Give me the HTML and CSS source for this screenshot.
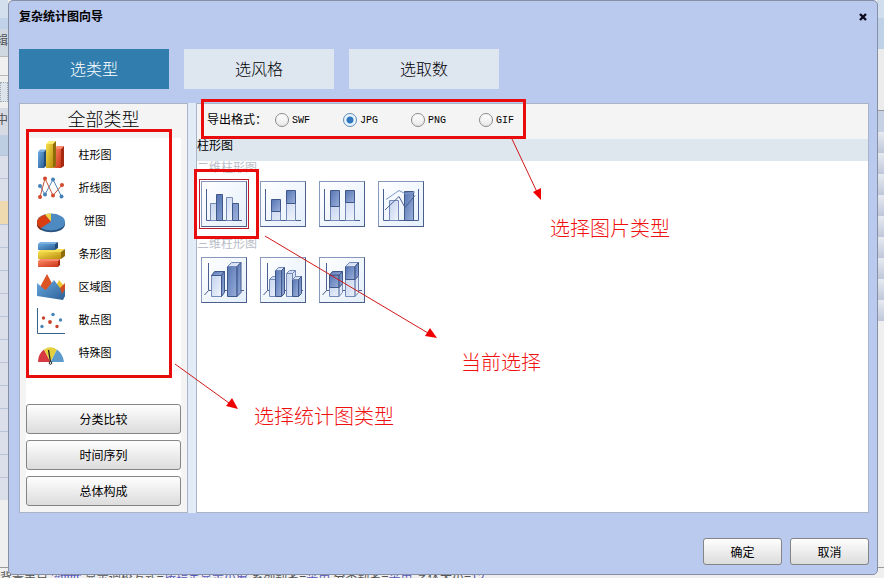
FILE: index.html
```html
<!DOCTYPE html>
<html lang="zh-CN">
<head>
  <meta charset="UTF-8">
  <title>复杂统计图向导</title>
  <link rel="stylesheet" href="styles.css">
</head>
<body>

  <!-- page behind the dialog -->
  <div class="backdrop">
    <div class="backdrop-main">
      <div class="backdrop-left">
        <div class="bar-top"></div>
        <div class="bar-tab"></div>
        <div class="bar-menu">辑</div>
        <div class="bar-input"></div>
        <div class="bar-dots"></div>
        <div class="bar-menu bar-cell">中</div>
        <div class="bar-head"></div>
        <div class="bar-rows"></div>
        <div class="bar-current"></div>
        <div class="bar-rows bar-rest"></div>
      </div>
      <div class="backdrop-right">
        <div class="side-top"></div>
        <div class="side-tab"></div>
        <div class="side-tools"></div>
        <div class="side-head"></div>
        <div class="side-rows"></div>
      </div>
    </div>
    <div class="backdrop-status">背景串户 <b>'#ffffff'</b> 显示调校方式=<b>按指定显示小窗</b> 系列别名=<b>采用</b> 分类别名=<b>采用</b> 字体大小=<b>12</b></div>
  </div>

  <div class="dialog" role="dialog" aria-labelledby="dialogTitle">
    <div class="title-bar">
      <h1 id="dialogTitle">复杂统计图向导</h1>
      <button type="button" class="close-btn" aria-label="关闭">
        <svg width="8" height="8" viewBox="0 0 8 8"><path d="M1 1L7 7M7 1L1 7" stroke="#0a0a1e" stroke-width="2.4"/></svg>
      </button>
    </div>

    <div class="tabs">
      <button type="button" class="tab active">选类型</button>
      <button type="button" class="tab">选风格</button>
      <button type="button" class="tab">选取数</button>
    </div>

    <div class="panels">
      <div class="side-panel">
        <h2>全部类型</h2>
        <div class="side-body">
          <ul class="type-list">
            <li><button type="button">
              <svg width="28" height="28" viewBox="0 0 28 28">
                <defs>
                  <linearGradient id="blue" x1="0" y1="0" x2="1" y2="1"><stop offset="0" stop-color="#68a9e0"/><stop offset="1" stop-color="#2c5f96"/></linearGradient>
                  <linearGradient id="gold" x1="0" y1="0" x2="1" y2="1"><stop offset="0" stop-color="#f4e04e"/><stop offset="1" stop-color="#bb8c0c"/></linearGradient>
                  <linearGradient id="red" x1="0" y1="0" x2="1" y2="1"><stop offset="0" stop-color="#fa8262"/><stop offset="1" stop-color="#c93314"/></linearGradient>
                </defs>
                <path fill="url(#blue)" d="M1 11h6v16H1z"/><path fill="#79b2e2" d="M1 11l2-2.500h6L7 11z"/><path fill="#214b78" d="M7 11l2-2.500V25l-2 2z"/>
                <path fill="url(#red)" d="M17 8h7v19h-7z"/><path fill="#ff8b6e" d="M17 8l3-3h7l-3 3z"/><path fill="#a52a10" d="M24 8l3-3v20l-3 2z"/>
                <path fill="url(#gold)" d="M9 3h7v24H9z"/><path fill="#ffed70" d="M9 3l3-3h7l-3 3z"/><path fill="#8f6c0a" d="M16 3l3-3v25l-3 2z"/>
              </svg>
              <span>柱形图</span></button></li>
            <li><button type="button">
              <svg width="28" height="28" viewBox="0 0 28 28">
                <path fill="none" stroke="#4f86b8" d="M3 12l5 8.500L16 5.500l8.500 17"/>
                <path fill="none" stroke="#c4553c" d="M3 23L8 4.500l8 17L25 11"/>
                <g fill="#4580b6"><circle cx="3" cy="12" r="2"/><circle cx="8" cy="20.500" r="2"/><circle cx="16" cy="5.500" r="2"/><circle cx="24.500" cy="22.500" r="2"/></g>
                <g fill="#d1492c"><circle cx="3" cy="23" r="2"/><circle cx="8" cy="4.500" r="2"/><circle cx="16" cy="21.500" r="2"/><circle cx="25" cy="11" r="2"/></g>
              </svg>
              <span>折线图</span></button></li>
            <li><button type="button">
              <svg width="28" height="28" viewBox="0 0 28 28">
                <path fill="#2b5582" d="M0 15v2c0 11 28 11 28 0v-2z"/>
                <ellipse cx="14" cy="15" rx="14" ry="8.500" fill="#4d8ac2"/>
                <path fill="#d83e12" d="M14 14.500L8 7.400C-1 10-3 18 4 21z"/>
                <path fill="#8c2c12" d="M0 15c0 3 1 4.500 4 6v2c-3-1.500-4-3.500-4-6z"/>
                <path fill="#f3d448" d="M14 14.500L8 7.400q3-1 6-.9z"/>
              </svg>
              <span>饼图</span></button></li>
            <li><button type="button">
              <svg width="28" height="28" viewBox="0 0 28 28">
                <path fill="url(#red)" d="M1 21h20v6H1z"/><path fill="#f98b6c" d="M1 21l2-2h20l-2 2z"/><path fill="#a52a10" d="M21 21l2-2v6l-2 2z"/>
                <path fill="url(#gold)" d="M1 12h23v7H1z"/><path fill="#f6df50" d="M1 12l3-3h24l-4 3z"/><path fill="#8f6c0a" d="M24 12l4-3v7l-4 3z"/>
                <path fill="url(#blue)" d="M1 4h17v6H1z"/><path fill="#79b2e2" d="M1 4l2-2h18l-3 2z"/><path fill="#214b78" d="M18 4l3-2v6l-3 2z"/>
              </svg>
              <span>条形图</span></button></li>
            <li><button type="button">
              <svg width="28" height="28" viewBox="0 0 28 28">
                <path fill="#edc62f" d="M18 15l4-8 6 7v9h-8z"/>
                <path fill="#cf4a20" d="M22 16l6-6v13l-4 3z"/>
                <path fill="#dc5324" d="M3 14l7-13 8 15-9 6z"/>
                <path fill="url(#blue)" d="M0 10l7 6 2 1 8-10 6 8 2 6 3-5v7l-2 4-26-4z"/>
              </svg>
              <span>区域图</span></button></li>
            <li><button type="button">
              <svg width="28" height="28" viewBox="0 0 28 28">
                <path fill="none" stroke="#38648c" d="M.5 2v25.500H28"/>
                <g fill="#c8432b"><circle cx="6.500" cy="12" r="1.700"/><circle cx="13" cy="16" r="1.900"/><circle cx="20" cy="20.500" r="1.700"/></g>
                <g fill="#4a86b8"><circle cx="16" cy="8.500" r="1.800"/><circle cx="23.500" cy="14" r="1.700"/><circle cx="5" cy="20.500" r="1.700"/></g>
              </svg>
              <span>散点图</span></button></li>
            <li><button type="button">
              <svg width="28" height="28" viewBox="0 0 28 28">
                <path fill="#d83a42" d="M13.500 23H1Q1 15 7 10.500z"/>
                <path fill="#e3d03c" d="M13.500 23L7 10.500q6.500-4.500 13 0z"/>
                <path fill="#5d9bcd" d="M13.500 23L20 10.500Q26 15 27 23z"/>
                <path stroke="#222" stroke-width="1.300" d="M11.500 11l2 12"/>
                <circle cx="13.500" cy="24" r="1.300" fill="#fff" stroke="#222"/>
              </svg>
              <span>特殊图</span></button></li>
          </ul>
          <div class="side-actions">
            <button type="button" class="btn">分类比较</button>
            <button type="button" class="btn">时间序列</button>
            <button type="button" class="btn">总体构成</button>
          </div>
        </div>
      </div>

      <div class="main-panel">
        <div class="format-bar">
          <span class="format-label">导出格式：</span>
          <label><input type="radio" name="format" value="swf"><span>SWF</span></label>
          <label><input type="radio" name="format" value="jpg" checked><span>JPG</span></label>
          <label><input type="radio" name="format" value="png"><span>PNG</span></label>
          <label><input type="radio" name="format" value="gif"><span>GIF</span></label>
        </div>
        <div class="category">柱形图</div>

        <h3>二维柱形图</h3>
        <div class="tiles">
          <button type="button" class="tile selected" aria-label="簇状柱形图">
            <svg width="44" height="44" viewBox="1 1 44 44">
              <defs>
                <linearGradient id="light" x1="0" y1="0" x2="1" y2="1"><stop offset="0" stop-color="#c3d2ed"/><stop offset="1" stop-color="#f1f5fd"/></linearGradient>
                <linearGradient id="dark" x1="0" y1="0" x2="1" y2="1"><stop offset="0" stop-color="#5675b3"/><stop offset="1" stop-color="#9bb0da"/></linearGradient>
              </defs>
              <path class="axis" d="M5.500 8v31.500H41"/>
              <path class="light" d="M9.500 22.500h6v17h-6zM25.500 16.500h6v23h-6z"/>
              <path class="dark" d="M15.500 13.500h6v26h-6zM31.500 22.500h6v17h-6z"/>
            </svg>
          </button>
          <button type="button" class="tile" aria-label="堆积柱形图">
            <svg width="44" height="44" viewBox="1 1 44 44">
              <path class="axis" d="M5.500 8v31.500H41"/>
              <path class="light" d="M11.500 30.500h9v9h-9zM26.500 22.500h9v17h-9z"/>
              <path class="dark" d="M11.500 18.500h9v12h-9z"/><path class="dark" d="M26.500 9.500h9v13h-9z"/>
            </svg>
          </button>
          <button type="button" class="tile" aria-label="百分比堆积柱形图">
            <svg width="44" height="44" viewBox="1 1 44 44">
              <path class="axis" d="M5.500 8v31.500H41"/>
              <path class="light" d="M11.500 25.500h9v14h-9zM26.500 21.500h9v18h-9z"/>
              <path class="dark" d="M11.500 9.500h9v16h-9z"/><path class="dark" d="M26.500 9.500h9v12h-9z"/>
            </svg>
          </button>
          <button type="button" class="tile" aria-label="柱线组合图">
            <svg width="44" height="44" viewBox="1 1 44 44">
              <path class="axis" d="M5.500 8v31.500h35V8"/>
              <path class="light" d="M11.500 19.500h9v20h-9z"/>
              <path class="dark" d="M26.500 10.500h9v29h-9z"/>
              <path class="line-light" d="M8 18.500l13-9 7 3.500 9-2"/>
              <path class="axis" d="M7 29l14-13.500 6 11 10-12"/>
            </svg>
          </button>
        </div>

        <h3>三维柱形图</h3>
        <div class="tiles">
          <button type="button" class="tile" aria-label="三维柱形图">
            <svg width="44" height="44" viewBox="1 1 44 44">
              <path class="axis" d="M7.500 6v27.500H43M7.500 33.500l-4 4.500"/>
              <path class="light" d="M10.500 18.500h10v21h-10z"/><path class="dark" d="M10.500 18.500l3-4h10l-3 4z"/><path class="dark" d="M20.500 18.500l3-4v21l-3 4z"/>
              <path class="dark" d="M26.500 9.500H36v30h-9.500z"/><path class="light" d="M26.500 9.500l4-4h9.500l-4 4z"/><path class="dark" d="M36 9.500l4-4v30l-4 4z"/>
            </svg>
          </button>
          <button type="button" class="tile" aria-label="三维簇状柱形图">
            <svg width="44" height="44" viewBox="1 1 44 44">
              <path class="axis" d="M7.500 6v27.500H43M7.500 33.500l-4 4.500"/>
              <path class="light" d="M9.500 22.500h6v17h-6zM9.500 22.500l3-3h6l-3 3z"/>
              <path class="dark" d="M15.500 13.500h6v26h-6z"/><path class="light" d="M15.500 13.500l3-3h6l-3 3z"/><path class="dark" d="M21.500 13.500l3-3v26l-3 3z"/>
              <path class="light" d="M26.500 16.500h6v23h-6zM26.500 16.500l3-3h6l-3 3zM32.500 16.500l3-3v20l-3 3z"/>
              <path class="dark" d="M32.500 22.500h6v17h-6z"/><path class="light" d="M32.500 22.500l3-3h6l-3 3z"/><path class="dark" d="M38.500 22.500l3-3v17l-3 3z"/>
            </svg>
          </button>
          <button type="button" class="tile" aria-label="三维堆积柱形图">
            <svg width="44" height="44" viewBox="1 1 44 44">
              <path class="axis" d="M7.500 6v27.500H43M7.500 33.500l-4 4.500"/>
              <path class="light" d="M10.500 30.500h9.500v9h-9.500zM20 30.500l3.500-4v9l-3.500 4z"/>
              <path class="dark" d="M10.500 18h9.500v12.500h-9.500z"/><path class="dark" d="M10.500 18l3-3.500h10L20 18z"/><path class="dark" d="M20 18l3.500-3.500v12l-3.500 4z"/>
              <path class="light" d="M26.500 22.500H36v17h-9.500zM36 22.500l3.500-4v17l-3.500 4z"/>
              <path class="dark" d="M26.500 9.500H36v13h-9.500z"/><path class="light" d="M26.500 9.500l4-4h9l-3.500 4z"/><path class="dark" d="M36 9.500l3.500-4v13l-3.500 4z"/>
            </svg>
          </button>
        </div>
      </div>
    </div>

    <div class="dialog-actions">
      <button type="button" class="btn">确定</button>
      <button type="button" class="btn">取消</button>
    </div>
  </div>

  <!-- red callouts drawn on top of the dialog -->
  <div class="callouts">
    <svg width="884" height="578" viewBox="0 0 884 578">
      <g fill="none" stroke="#e80c0c" stroke-width="3">
        <path d="M27.500 130.500h143v246h-143z"/>
        <path d="M202.500 100.500h322v37h-322z"/>
        <path d="M195.500 170.500h62v67h-62z"/>
      </g>
      <g stroke="#d01818">
        <path d="M512 139l25 53M265 236l163 97M175 364l54 39"/>
      </g>
      <g fill="#f00000">
        <path d="M541 200l-8-8 8-4z"/>
        <path d="M437 338l-12-2 5-8z"/>
        <path d="M238 409l-12-3 6-8z"/>
      </g>
    </svg>
    <span class="note note-format">选择图片类型</span>
    <span class="note note-current">当前选择</span>
    <span class="note note-type">选择统计图类型</span>
  </div>

</body>
</html>
```
FILE: styles.css
```css
* {
  box-sizing: border-box;
}

body {
  margin: 0;
  position: relative;
  min-height: 100vh;
  overflow: hidden;
  font-family: "Liberation Sans", "Noto Sans CJK SC", sans-serif;
  font-size: 12px;
  line-height: 16px;
  color: #000;
  background: #efefef;
}

h1, h2, h3, ul {
  margin: 0;
  padding: 0;
  font-weight: normal;
}

button {
  font: inherit;
  color: inherit;
  padding: 0;
  cursor: pointer;
}

svg {
  display: block;
}

/* page behind */
.backdrop {
  position: absolute;
  inset: 0;
  overflow: hidden;
  display: flex;
  flex-direction: column;
}

.backdrop-main {
  flex: 1;
  min-height: 0;
  display: flex;
  justify-content: space-between;
  border-bottom: 1px solid #999;
}

.backdrop-left {
  width: 8px;
  overflow: hidden;
}

.backdrop-right {
  width: 7px;
}

.bar-top { height: 18px; background: #d3dfec; }
.bar-tab { height: 11px; background: #bfd2e8; }

.bar-menu {
  height: 27px;
  padding-top: 4px;
  background: #cfd7e0;
  color: #555;
  direction: rtl;
}

.bar-input {
  height: 20px;
  background: #f0f0f0;
  border: solid #b8b8b8;
  border-width: 1px 0;
}

.bar-dots {
  height: 20px;
  margin: 6px 0;
  background: #dde3ea;
  border: 1px dotted #a0a8b0;
}

.bar-cell { background: #d6dbe3; }
.bar-head { height: 20px; background: #bdcde2; }

.bar-rows {
  height: 46px;
  background: repeating-linear-gradient(#b9c4d8 0 1px, #dbdfea 1px 23px);
}

.bar-current { height: 23px; background: #efd9af; }
.bar-rest { height: 276px; }

.side-top { height: 18px; background: #d0deed; }
.side-tab { height: 31px; background: #bfd1e6; }
.side-tools { height: 62px; background: #ececec; border-bottom: 1px solid #999; }
.side-head { height: 21px; background: #c6d2e3; }

.side-rows {
  height: 189px;
  background: repeating-linear-gradient(#e7eaf0 0, #bec7da 21px);
}

.backdrop-status {
  height: 10px;
  padding-top: 2px;
  white-space: nowrap;
  color: #555;
}

.backdrop-status b {
  font-weight: normal;
  color: #5555bb;
}

/* dialog */
.dialog {
  position: absolute;
  inset: 0 6px 3px 8px;
  display: flex;
  flex-direction: column;
  padding: 0 8px 9px 10px;
  background: #bac9ee;
  border: 1px solid #858fa5;
  border-radius: 5px;
}

.title-bar {
  display: flex;
  justify-content: space-between;
  align-items: center;
  height: 32px;
}

.title-bar h1 {
  font-size: 12px;
  font-weight: bold;
}

.close-btn {
  padding: 2px;
  border: 0;
  background: none;
}

.tabs {
  display: flex;
  gap: 15px;
  margin-top: 16px;
}

.tab {
  width: 150px;
  height: 40px;
  padding-top: 2px;
  border: 0;
  font-size: 16px;
  font-weight: 300;
  background: #dee6f0;
}

.tab.active {
  background: #307dae;
  color: #fff;
}

.panels {
  flex: 1;
  display: flex;
  gap: 8px;
  margin-top: 14px;
  background: #e1ecf6;
}

.side-panel {
  width: 169px;
  display: flex;
  flex-direction: column;
  padding: 0 6px 6px;
  background: #f4f4f4;
  border: 1px solid #aab4c8;
}

.side-panel h2 {
  height: 34px;
  font-size: 18px;
  font-weight: 300;
  line-height: 32px;
  text-align: center;
}

.side-body {
  flex: 1;
  display: flex;
  flex-direction: column;
  justify-content: space-between;
  background: #fff;
}

.type-list {
  list-style: none;
}

.type-list button {
  display: flex;
  align-items: center;
  gap: 12px;
  width: 100%;
  height: 33px;
  padding-left: 11px;
  border: 0;
  background: none;
  font-size: 11px;
}

.type-list span {
  width: 36px;
}

.side-actions {
  display: flex;
  flex-direction: column;
  gap: 6px;
}

.btn {
  height: 30px;
  padding-top: 2px;
  border: 1px solid #858585;
  border-radius: 3px;
  background: linear-gradient(#fefefe, #dcdcdc);
}

.main-panel {
  flex: 1;
  background: #fff;
  border: 1px solid #aab4c8;
}

.format-bar {
  display: flex;
  align-items: center;
  height: 35px;
  padding: 0 10px 4px;
  background: #f4f4f4;
}

.format-label {
  width: 68px;
}

.format-bar label {
  display: flex;
  align-items: center;
  gap: 3px;
  width: 68px;
  font-family: "Liberation Mono", monospace;
  font-size: 10px;
}

.format-bar label span {
  padding-top: 2px;
}

.format-bar input {
  appearance: none;
  width: 14px;
  height: 14px;
  margin: 0;
  border: 1px solid #8a8a8a;
  border-radius: 50%;
  background: linear-gradient(#fff, #e8e8e8);
}

.format-bar input:checked {
  border-color: #5a8cb5;
  background: radial-gradient(#2f78bd 0 3px, #eaf4fc 4px);
}

.category {
  height: 22px;
  line-height: 14px;
  background: #dde7ed;
}

.main-panel h3 {
  height: 20px;
  font-size: 12px;
  line-height: 14px;
  color: #b9bec8;
}

.tiles {
  display: flex;
  gap: 13px;
  padding: 0 4px;
  margin-bottom: 10px;
}

.tile {
  width: 46px;
  height: 46px;
  border: 1px solid #8798bd;
  border-right-color: #4c5f8a;
  border-bottom-color: #4c5f8a;
  background: linear-gradient(135deg, #fff, #e4effc);
  overflow: hidden;
}

.tile.selected {
  outline: 1px solid #c01c2c;
  outline-offset: 1px;
}

.axis { fill: none; stroke: #4b6090; }
.light { fill: url(#light); stroke: #7489b5; }
.dark { fill: url(#dark); stroke: #405789; }
.line-light { fill: none; stroke: #7f97c9; }

.dialog-actions {
  display: flex;
  justify-content: flex-end;
  gap: 8px;
  margin-top: 25px;
}

.dialog-actions .btn {
  width: 79px;
  height: 27px;
}

/* callouts */
.callouts {
  position: absolute;
  top: 0;
  left: 0;
  pointer-events: none;
}

.note {
  position: absolute;
  font-size: 20px;
  line-height: 24px;
  font-weight: 300;
  white-space: nowrap;
  color: #f01010;
}

.note-format { left: 550px; top: 217px; }
.note-current { left: 461px; top: 351px; }
.note-type { left: 254px; top: 405px; }
```
